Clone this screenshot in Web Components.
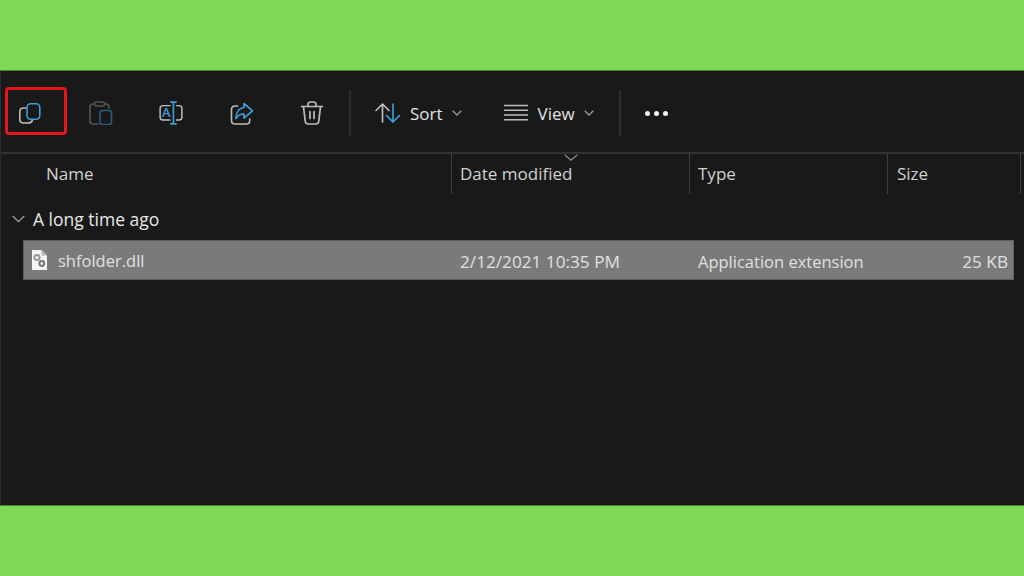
<!DOCTYPE html>
<html>
<head>
<meta charset="utf-8">
<title>shfolder.dll</title>
<style>
html,body{margin:0;height:100%;}
body{background:#7ed957;font-family:"Open Sans","Liberation Sans",sans-serif;}
</style>
</head>
<body>
<explorer-window>
   <tool-bar slot="toolbar">
      <tool-icon marked>
         <svg viewBox="0 0 24 24" width="24" height="24" fill="none" stroke-width="1.6" stroke-linecap="round">
            <path d="M8 7H5.5C3 7 1.8 8.5 1.8 10.5V18.5C1.8 20.8 3 22 5.5 22H10C12.5 22 14 21 14.5 19" stroke="#bdbdbd"/>
            <rect x="9" y="2.8" width="12.8" height="15.4" rx="3.6" stroke="#3a9fd8"/>
         </svg>
      </tool-icon>
      <tool-icon>
         <svg viewBox="0 0 24 24" width="24" height="24" fill="none" stroke-width="1.6" stroke-linecap="round">
            <path d="M5 3H4C2 3 1 4.3 1 6V20.5C1 22.3 2 23 4 23H9M15.5 3H17C19 3 20 4.2 20 6V7.5" stroke="#565656"/>
            <rect x="5.5" y="1" width="10" height="4" rx="2" stroke="#565656"/>
            <rect x="11" y="9.5" width="11.5" height="14" rx="2.6" stroke="#2b5c7a"/>
         </svg>
      </tool-icon>
      <tool-icon>
         <svg viewBox="0 0 26 26" width="26" height="26" fill="none" stroke-width="1.6" stroke-linecap="round">
            <path d="M12 5H4.5C2.5 5 1.2 6.2 1.2 8V17.5C1.2 19.4 2.5 20.6 4.5 20.6H12M19 5H21.5C23.5 5 24.8 6.2 24.8 8V17.5C24.8 19.4 23.5 20.6 21.5 20.6H19" stroke="#bdbdbd"/>
            <path d="M15.6 1.2V24.8M12.6 1.2H18.6M12.6 24.8H18.6" stroke="#3a9fd8" stroke-width="1.8"/>
            <text x="8" y="17.8" text-anchor="middle" font-family="'Open Sans',sans-serif" font-size="14" font-weight="600" fill="#3a9fd8" stroke="none">A</text>
         </svg>
      </tool-icon>
      <tool-icon>
         <svg viewBox="0 0 24 24" width="24" height="24" fill="none" stroke-width="1.6" stroke-linecap="round" stroke-linejoin="round">
            <path d="M7.5 5H5C3 5 1.5 6.3 1.5 8.3V19.5C1.5 21.5 3 23 5 23H16.5C18.5 23 19.7 21.5 19.7 19.5V18" stroke="#bdbdbd"/>
            <path d="M14 2.5L22.5 9.8L14 17V13C10.5 12.8 8 14.3 6 17.5C6 11.5 9 7 14 6.5Z" stroke="#3a9fd8" stroke-width="1.7"/>
         </svg>
      </tool-icon>
      <tool-icon style="margin-right:25px">
         <svg viewBox="0 0 24 24" width="24" height="24" fill="none" stroke-width="1.7" stroke-linecap="round" stroke-linejoin="round" stroke="#bdbdbd">
            <path d="M1.5 5.5H22.5M8 5V3.5C8 2 9 1 10.5 1H13.5C15 1 16 2 16 3.5V5"/>
            <path d="M3.5 6L5.3 20.5C5.5 22.2 6.5 23 8 23H16C17.5 23 18.5 22.2 18.7 20.5L20.5 6"/>
            <path d="M10 10.5V17.5M14 10.5V17.5"/>
         </svg>
      </tool-icon>
      <tool-sep style="margin-right:24px"></tool-sep>
      <tool-menu label="Sort">
         <svg viewBox="0 0 26 22" width="26" height="22" fill="none" stroke-width="1.7" stroke-linecap="round" stroke-linejoin="round">
            <path d="M7.5 20V2M1 8.5L7.5 2L14 8.5" stroke="#bdbdbd"/>
            <path d="M18 2V20M11.5 13.5L18 20L24.5 13.5" stroke="#3a9fd8"/>
         </svg>
      </tool-menu>
      <tool-menu label="View" style="margin-right:25px">
         <svg viewBox="0 0 24 18" width="24" height="18" fill="none" stroke-width="1.5" stroke="#bdbdbd" style="margin-right:1px">
            <path d="M0 1.5H24M0 6.2H24M0 11H24M0 15.8H24"/>
         </svg>
      </tool-menu>
      <tool-sep></tool-sep>
      <tool-dots></tool-dots>
   </tool-bar>
   <column-header></column-header>
   <group-row label="A long time ago"></group-row>
   <file-row name="shfolder.dll" date="2/12/2021 10:35 PM" type="Application extension" size="25 KB"></file-row>
</explorer-window>

<script>
window.customElements.define('explorer-window', class extends HTMLElement {
   constructor(){
      super(); this.attachShadow({mode:'open'});
      this.shadowRoot.innerHTML = `
      <style>
      :host{display:flex;flex-direction:column;box-sizing:border-box;height:434px;margin-top:71px;
         background:#191919;border-left:1px solid #2c2c2c;color:#e4e4e4;
         box-shadow:0 -1px 0 #4d7c39,0 1px 0 #4d7c39;}
      </style>
      <slot name="toolbar"></slot>
      <slot></slot>`;
   }
});

window.customElements.define('tool-bar', class extends HTMLElement {
   constructor(){
      super(); this.attachShadow({mode:'open'});
      this.shadowRoot.innerHTML = `
      <style>
      :host{display:flex;align-items:center;box-sizing:border-box;height:83px;padding:3px 0 0 17px;
         border-bottom:2px solid #333;}
      </style>
      <slot></slot>`;
   }
});

window.customElements.define('tool-icon', class extends HTMLElement {
   constructor(){
      super(); this.attachShadow({mode:'open'});
      this.shadowRoot.innerHTML = `
      <style>
      :host{display:flex;align-items:center;justify-content:center;position:relative;width:24px;height:26px;margin-right:46.5px;}
      :host([marked])::after{content:"";position:absolute;left:-13px;top:-13px;width:62px;height:48px;box-sizing:border-box;
         border:3px solid #e4161b;border-radius:4px;}
      </style>
      <slot></slot>`;
   }
});

window.customElements.define('tool-sep', class extends HTMLElement {
   constructor(){
      super(); this.attachShadow({mode:'open'});
      this.shadowRoot.innerHTML = `
      <style>
      :host{display:block;width:2px;height:46px;background:#2e2e2e;margin:0 22px 0 0;}
      </style>`;
   }
});

window.customElements.define('tool-menu', class extends HTMLElement {
   get label(){ return this.getAttribute("label"); }
   constructor(){
      super(); this.attachShadow({mode:'open'});
      this.shadowRoot.innerHTML = `
      <style>
      :host{display:flex;align-items:center;font-size:17px;color:#e4e4e4;margin-right:42px;}
      .txt{margin:0 9px;}
      svg.chev{display:block;}
      </style>
      <slot></slot>
      <span class="txt">${this.label}</span>
      <svg class="chev" viewBox="0 0 10 6" width="10" height="6" fill="none" stroke="#9a9a9a" stroke-width="1.3"><path d="M.7.7L5 5L9.3.7"/></svg>`;
   }
});

window.customElements.define('tool-dots', class extends HTMLElement {
   constructor(){
      super(); this.attachShadow({mode:'open'});
      this.shadowRoot.innerHTML = `
      <style>
      :host{display:flex;gap:4px;margin-left:2px;}
      i{width:5px;height:5px;border-radius:50%;background:#f2f2f2;display:block;}
      </style>
      <i></i><i></i><i></i>`;
   }
});

const GRID = "grid-template-columns:451px 238px 198px 133px 1fr;";

window.customElements.define('column-header', class extends HTMLElement {
   constructor(){
      super(); this.attachShadow({mode:'open'});
      this.shadowRoot.innerHTML = `
      <style>
      :host{display:grid;${GRID}height:40px;font-size:17px;color:#d2d2d2;position:relative;}
      div{display:flex;align-items:center;padding-left:8px;padding-bottom:1px;border-right:1px solid #3e3e3e;}
      div.name{padding-left:45px;}
      div.size{padding-left:9px;}
      div.end{border:0;}
      svg{position:absolute;left:563px;top:0;}
      </style>
      <div class="name">Name</div><div>Date modified</div><div>Type</div><div class="size">Size</div><div class="end"></div>
      <svg viewBox="0 0 14 7" width="14" height="7" fill="none" stroke="#8a8a8a" stroke-width="1.2"><path d="M.7.7L7 6.3L13.3.7"/></svg>`;
   }
});

window.customElements.define('group-row', class extends HTMLElement {
   get label(){ return this.getAttribute("label"); }
   constructor(){
      super(); this.attachShadow({mode:'open'});
      this.shadowRoot.innerHTML = `
      <style>
      :host{display:flex;align-items:center;box-sizing:border-box;height:46px;padding:4px 0 0 11px;font-size:17.5px;color:#e8e8e8;}
      svg{margin-right:8px;}
      </style>
      <svg viewBox="0 0 13 8" width="13" height="8" fill="none" stroke="#a8a8a8" stroke-width="1.3"><path d="M.7.9L6.5 6.7L12.3.9"/></svg>
      <span>${this.label}</span>`;
   }
});

window.customElements.define('file-row', class extends HTMLElement {
   constructor(){
      super(); this.attachShadow({mode:'open'});
      const a = n => this.getAttribute(n);
      this.shadowRoot.innerHTML = `
      <style>
      :host{display:grid;grid-template-columns:428px 238px 198px 1fr;align-items:center;box-sizing:border-box;height:40px;
         margin:0 10px 0 22px;background:#7a7a7a;border:1px solid #5e5e5e;font-size:17.2px;color:#e0e0e0;}
      .name{display:flex;align-items:center;gap:11px;padding-left:7px;font-size:16.5px;}
      .c{padding:2px 0 0 8px;}
      .t{font-size:16.5px;}
      .size{text-align:right;padding:2px 5px 0 0;}
      svg{display:block;}
      </style>
      <div class="name">
         <svg viewBox="0 0 16 20" width="16" height="20">
            <path d="M1 0H10.5L16 5.5V20H1Z" fill="#f4f4f4"/>
            <path d="M10.5 0V5.5H16Z" fill="#b5b5b5"/>
            <circle cx="6" cy="7.5" r="2.6" fill="none" stroke="#9a9a9a" stroke-width="2"/>
            <circle cx="10.8" cy="13.5" r="2.4" fill="none" stroke="#777" stroke-width="2"/>
         </svg>
         <span>${a("name")}</span>
      </div>
      <div class="c">${a("date")}</div>
      <div class="c t">${a("type")}</div>
      <div class="size">${a("size")}</div>`;
   }
});
</script>
</body>
</html>
